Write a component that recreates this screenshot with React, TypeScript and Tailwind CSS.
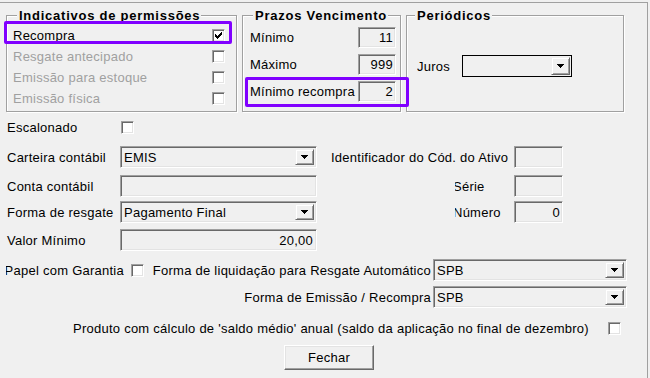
import React from "react";

function Check({ checked = false }: { checked?: boolean }) {
  return (
    <div className="w-[13px] h-[13px] shrink-0 bg-white border border-t-[#a0a0a0] border-l-[#a0a0a0] border-r-white border-b-white shadow-[inset_1px_1px_0_#696969,inset_-1px_-1px_0_#e3e3e3] flex items-center justify-center">
      {checked && (
        <svg width="7" height="7" viewBox="0 0 7 7" shapeRendering="crispEdges">
          <rect x="0" y="2" width="1" height="3" fill="#000" />
          <rect x="1" y="3" width="1" height="3" fill="#000" />
          <rect x="2" y="4" width="1" height="3" fill="#000" />
          <rect x="3" y="3" width="1" height="3" fill="#000" />
          <rect x="4" y="2" width="1" height="3" fill="#000" />
          <rect x="5" y="1" width="1" height="3" fill="#000" />
          <rect x="6" y="0" width="1" height="3" fill="#000" />
        </svg>
      )}
    </div>
  );
}

function Arrow() {
  return (
    <svg width="7" height="4" viewBox="0 0 7 4" shapeRendering="crispEdges">
      <rect x="0" y="0" width="7" height="1" fill="#000" />
      <rect x="1" y="1" width="5" height="1" fill="#000" />
      <rect x="2" y="2" width="3" height="1" fill="#000" />
      <rect x="3" y="3" width="1" height="1" fill="#000" />
    </svg>
  );
}

function DropBtn({ size }: { size: string }) {
  return (
    <div
      className={`${size} shrink-0 bg-[#f0f0f0] border border-t-[#f0f0f0] border-l-[#f0f0f0] border-r-[#696969] border-b-[#696969] shadow-[inset_1px_1px_0_#fff,inset_-1px_-1px_0_#a0a0a0] flex items-center justify-center`}
    >
      <Arrow />
    </div>
  );
}

function Sunken({
  size,
  children,
  right = false,
}: {
  size: string;
  children?: React.ReactNode;
  right?: boolean;
}) {
  return (
    <div
      className={`${size} shrink-0 flex items-center bg-[#f0f0f0] border border-t-[#a0a0a0] border-l-[#a0a0a0] border-r-white border-b-white shadow-[inset_1px_1px_0_#696969,inset_-1px_-1px_0_#e3e3e3] ${
        right ? "justify-end pr-[2px]" : "pl-[3px]"
      }`}
    >
      {children}
    </div>
  );
}

function Combo({ size, text }: { size: string; text: string }) {
  return (
    <div className={`${size} shrink-0 flex items-center bg-[#f0f0f0] border border-t-[#a0a0a0] border-l-[#a0a0a0] border-r-white border-b-white shadow-[inset_1px_1px_0_#696969,inset_-1px_-1px_0_#e3e3e3]`}>
      <span className="flex-1 pl-[3px] whitespace-nowrap overflow-hidden">{text}</span>
      <div className="mr-[2px]">
        <DropBtn size="w-[19px] h-[16px]" />
      </div>
    </div>
  );
}

function Group({
  title,
  size,
  legendMl,
  children,
}: {
  title: string;
  size: string;
  legendMl: string;
  children: React.ReactNode;
}) {
  return (
    <fieldset
      className={`${size} h-[104px] m-0 p-0 min-w-0 shrink-0 border border-[#a0a0a0] shadow-[inset_1px_1px_0_#fff,1px_1px_0_#fff]`}
    >
      <legend className={`${legendMl} pl-[2px] pr-[1px] bg-[#f0f0f0] font-bold tracking-[0.75px] leading-[15px] text-[13px]`}>
        {title}
      </legend>
      {children}
    </fieldset>
  );
}

export default function App() {
  return (
    <div className="relative w-[650px] h-[378px] overflow-hidden bg-[#f0f0f0] text-black text-[13px] leading-[15px] tracking-[0.25px] font-['Liberation_Sans',Arial,sans-serif]">
      <div className="mt-[2px] w-[648px] h-[376px] border-t border-r border-[#a0a0a0] flex flex-col pt-[5px]">
        {/* Top group boxes */}
        <div className="flex pl-[6px] gap-[5px]">
          <Group title="Indicativos de permissões" size="w-[231px]" legendMl="ml-[10px]">
            <div className="flex flex-col pt-[2px] pl-[6px]">
              <div className="h-[21px] flex items-center">
                <span className="w-[199px]">Recompra</span>
                <Check checked />
              </div>
              <div className="h-[21px] flex items-center text-[#a0a0a0]">
                <span className="w-[199px]">Resgate antecipado</span>
                <Check />
              </div>
              <div className="h-[21px] flex items-center text-[#a0a0a0]">
                <span className="w-[199px]">Emissão para estoque</span>
                <Check />
              </div>
              <div className="h-[21px] flex items-center text-[#a0a0a0]">
                <span className="w-[199px]">Emissão física</span>
                <Check />
              </div>
            </div>
          </Group>

          <Group title="Prazos Vencimento" size="w-[159px]" legendMl="ml-[10px]">
            <div className="flex flex-col pt-[4px] gap-[6px] pl-[7px]">
              <div className="h-[21px] flex items-center">
                <span className="w-[108px]">Mínimo</span>
                <Sunken size="w-[38px] h-[21px]" right>
                  11
                </Sunken>
              </div>
              <div className="h-[21px] flex items-center">
                <span className="w-[108px]">Máximo</span>
                <Sunken size="w-[38px] h-[21px]" right>
                  999
                </Sunken>
              </div>
              <div className="h-[21px] flex items-center">
                <span className="w-[108px] whitespace-nowrap">Mínimo recompra</span>
                <Sunken size="w-[38px] h-[21px]" right>
                  2
                </Sunken>
              </div>
            </div>
          </Group>

          <Group title="Periódicos" size="w-[218px]" legendMl="ml-[8px]">
            <div className="flex items-center pt-[32px] pl-[10px]">
              <span className="w-[45px] flex">
                <span className="w-[33px] overflow-hidden whitespace-nowrap">Juros</span>
              </span>
              <div className="w-[110px] h-[22px] flex items-center border border-black bg-[#f0f0f0]">
                <span className="flex-1" />
                <div className="mr-[1px]">
                  <DropBtn size="w-[19px] h-[18px]" />
                </div>
              </div>
            </div>
          </Group>
        </div>

        {/* Escalonado */}
        <div className="mt-[6px] h-[18px] flex items-center pl-[7px]">
          <span className="w-[114px]">Escalonado</span>
          <Check />
        </div>

        {/* Carteira contábil / Identificador */}
        <div className="mt-[10px] h-[22px] flex items-center pl-[7px]">
          <span className="w-[113px]">Carteira contábil</span>
          <Combo size="w-[197px] h-[22px]" text="EMIS" />
          <span className="w-[197px] pl-[14px] whitespace-nowrap">Identificador do Cód. do Ativo</span>
          <Sunken size="w-[49px] h-[22px]" />
        </div>

        {/* Conta contábil / Série */}
        <div className="mt-[7px] h-[22px] flex items-center pl-[7px]">
          <span className="w-[113px]">Conta contábil</span>
          <Sunken size="w-[197px] h-[22px]" />
          <div className="w-[197px] pl-[138px] flex">
            <span className="flex-1 flex overflow-hidden">
              <span className="-ml-[2px] shrink-0 whitespace-nowrap">Série</span>
            </span>
          </div>
          <Sunken size="w-[49px] h-[22px]" />
        </div>

        {/* Forma de resgate / Número */}
        <div className="mt-[4px] h-[22px] flex items-center pl-[7px]">
          <span className="w-[113px] whitespace-nowrap">Forma de resgate</span>
          <Combo size="w-[197px] h-[22px]" text="Pagamento Final" />
          <div className="w-[197px] pl-[138px] flex">
            <span className="flex-1 flex overflow-hidden">
              <span className="-ml-[2px] shrink-0 whitespace-nowrap">Número</span>
            </span>
          </div>
          <Sunken size="w-[49px] h-[22px]" right>
            0
          </Sunken>
        </div>

        {/* Valor Mínimo */}
        <div className="mt-[6px] h-[22px] flex items-center pl-[7px]">
          <span className="w-[113px]">Valor Mínimo</span>
          <Sunken size="w-[197px] h-[22px]" right>
            <span className="pr-[1px]">20,00</span>
          </Sunken>
        </div>

        {/* Papel com Garantia / Forma de liquidação */}
        <div className="mt-[8px] h-[22px] flex items-center pl-[6px]">
          <span className="w-[118px] flex justify-end overflow-hidden">
            <span className="shrink-0 whitespace-nowrap">Papel com Garantia</span>
          </span>
          <span className="w-[7px]" />
          <Check />
          <div className="w-[289px] pl-[8px] flex">
            <span className="flex-1 flex justify-end overflow-hidden pr-[2px]">
              <span className="shrink-0 whitespace-nowrap">Forma de liquidação para Resgate Automático</span>
            </span>
          </div>
          <Combo size="w-[194px] h-[22px]" text="SPB" />
        </div>

        {/* Forma de Emissão / Recompra */}
        <div className="mt-[5px] h-[22px] flex items-center">
          <span className="w-[433px] text-right pr-[2px] whitespace-nowrap">Forma de Emissão / Recompra</span>
          <Combo size="w-[194px] h-[22px]" text="SPB" />
        </div>

        {/* Produto saldo médio */}
        <div className="mt-[11px] h-[18px] flex items-center pl-[73px]">
          <span className="w-[535px] whitespace-nowrap">
            Produto com cálculo de 'saldo médio' anual (saldo da aplicação no final de dezembro)
          </span>
          <Check />
        </div>

        {/* Fechar */}
        <div className="mt-[8px] flex pl-[284px]">
          <button className="w-[90px] h-[25px] flex items-center justify-center bg-[#f0f0f0] border border-t-white border-l-white border-r-[#696969] border-b-[#696969] shadow-[inset_-1px_-1px_0_#a0a0a0,inset_1px_1px_0_#e3e3e3]">
            Fechar
          </button>
        </div>
      </div>

      {/* annotation highlights */}
      <div className="absolute left-[4px] top-[21px] w-[228px] h-[23px] border-[3px] border-[#8000ff] rounded-[2px]" />
      <div className="absolute left-[245px] top-[77px] w-[164px] h-[30px] border-[3px] border-[#8000ff] rounded-[2px]" />
    </div>
  );
}
